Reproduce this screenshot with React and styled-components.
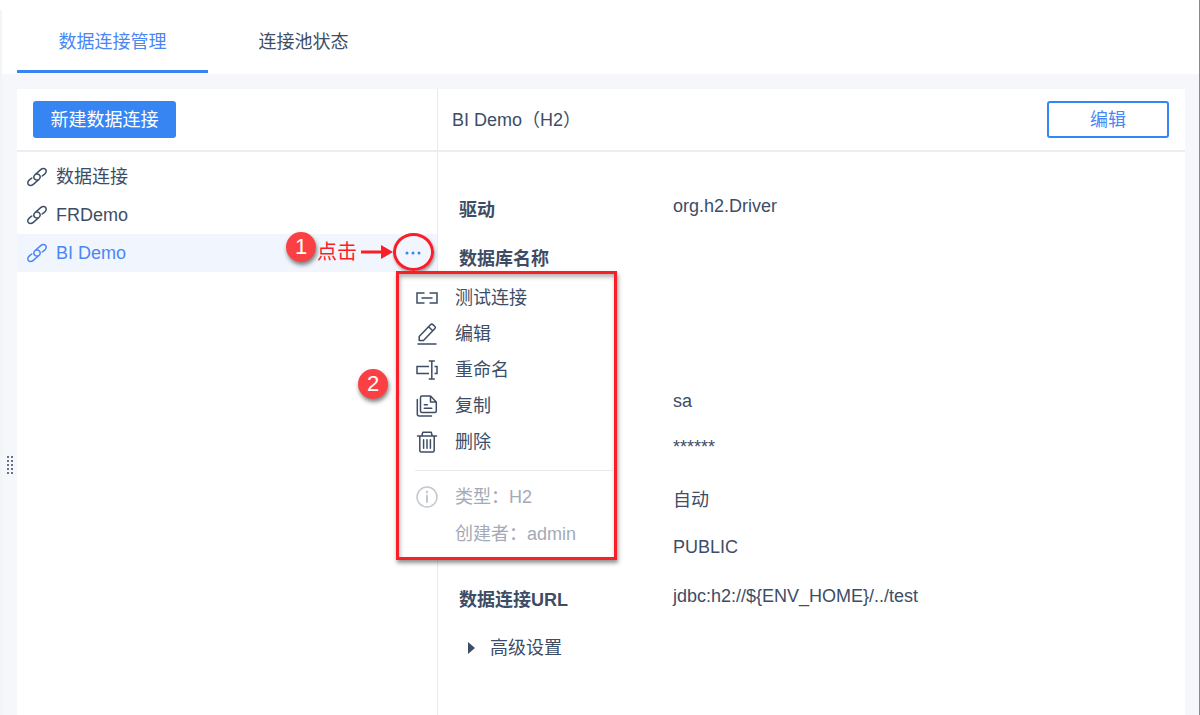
import React from 'react';
import styled, { createGlobalStyle, css } from 'styled-components';

const color = {
  text: '#3d4d66',
  faint: '#a3abb8',
  primary: '#3685f2',
  link: '#4b86f5',
  line: '#e8eaee',
  canvas: '#f6f7fa',
  selected: '#f1f6fe',
  mark: '#fb1d27',
};

const GlobalStyle = createGlobalStyle`
  *, *::before, *::after { box-sizing: border-box; }
  body {
    margin: 0;
    background: #fff;
    color: ${color.text};
    font: 18px/24px "Liberation Sans", "Noto Sans CJK SC", sans-serif;
  }
  button { font: inherit; color: inherit; background: none; border: 0; padding: 0; cursor: pointer; }
  ul, dl, dd, h1 { margin: 0; padding: 0; list-style: none; }
`;

const Root = styled.div`
  min-height: 100vh;
  display: flex;
  padding-top: 10px;
  border-right: 1px solid #8a8a8a;
`;

const Shell = styled.div`
  flex: 1;
  min-width: 0;
  display: flex;
  flex-direction: column;
  border-left: 2px solid #f3f4f7;
`;

const TabBar = styled.div`
  display: flex;
  height: 64px;
  padding-left: 15px;
  background: #fff;
`;

const Tab = styled.button`
  width: 191px;
  height: 63px;
  padding-top: 4px;
  border-bottom: 3px solid ${(p) => (p.$active ? color.primary : 'transparent')};
  color: ${(p) => (p.$active ? color.link : color.text)};
`;

const Workspace = styled.div`
  flex: 1;
  display: flex;
  background: ${color.canvas};
  padding-right: 14px;
`;

const Gutter = styled.div`
  width: 15px;
  display: flex;
  align-items: center;
  justify-content: center;
  padding-top: 140px;
`;

const Panels = styled.main`
  flex: 1;
  min-width: 0;
  display: flex;
  margin-top: 15px;
  background: #fff;
`;

const Sidebar = styled.section`
  width: 421px;
  flex: none;
  border-right: 1px solid ${color.line};
`;

const Detail = styled.section`
  flex: 1;
  min-width: 0;
`;

const PanelHeader = styled.header`
  display: flex;
  align-items: center;
  justify-content: space-between;
  height: 63px;
  padding: 0 16px 0 ${(p) => (p.$detail ? 14 : 16)}px;
  border-bottom: 2px solid #eceef1;
`;

const Button = styled.button`
  height: 37px;
  border-radius: 3px;
  border: 2px solid ${color.primary};
  ${(p) =>
    p.$primary
      ? css`width: 143px; background: ${color.primary}; color: #fff;`
      : css`width: 122px; background: #fff; color: ${color.link};`}
`;

const Title = styled.h1`
  font-size: 18px;
  font-weight: 400;
`;

const ConnectionList = styled.ul`
  && { padding-top: 6px; }
`;

const ConnectionRow = styled.li`
  position: relative;
  display: flex;
  height: 38px;
  background: ${(p) => (p.$selected ? color.selected : 'transparent')};
  color: ${(p) => (p.$selected ? color.link : color.text)};
`;

const ConnectionName = styled.button`
  flex: 1;
  display: flex;
  align-items: center;
  gap: 9px;
  padding-left: 10px;
  text-align: left;
`;

const MoreAnchor = styled.div`
  position: relative;
  width: 40px;
  display: flex;
`;

const MoreButton = styled.button`
  width: 32px;
  display: flex;
  align-items: center;
  justify-content: center;
`;

const Menu = styled.div`
  position: absolute;
  z-index: 2;
  top: 37px;
  left: -1px;
  width: 221px;
  padding: 6px 0 5px 16px;
  background: #fff;
  border: 3px solid ${color.mark};
  box-shadow: 1px 3px 4px rgba(40, 40, 40, 0.5), inset 1px 3px 4px rgba(40, 40, 40, 0.35);
  color: ${color.text};
`;

const menuLine = css`
  display: flex;
  align-items: center;
  gap: 16px;
  width: 100%;
  text-align: left;
`;

const MenuItem = styled.button`
  ${menuLine}
  height: 36px;
`;

const MenuInfo = styled.div`
  ${menuLine}
  height: 37px;
  color: ${color.faint};
`;

const MenuDivider = styled.div`
  height: 1px;
  margin: 10px 0 7px;
  background: ${color.line};
`;

const IconSlot = styled.span`
  width: 24px;
  height: 24px;
  flex: none;
`;

const Callout = styled.div`
  position: absolute;
  z-index: 3;
  right: 44px;
  top: -4px;
  display: flex;
  align-items: center;
  color: ${color.mark};
  font-size: 20px;
`;

const Badge = styled.span`
  display: flex;
  align-items: center;
  justify-content: center;
  width: 30px;
  height: 30px;
  border-radius: 50%;
  background: #fb4043;
  color: #fff;
  font-size: 22px;
  box-shadow: 1px 3px 4px rgba(40, 40, 40, 0.6);
`;

const CalloutText = styled.span`
  padding: 10px 4px 0 1px;
`;

const CalloutArrow = styled.svg`
  margin-top: 10px;
`;

const MenuBadge = styled(Badge)`
  position: absolute;
  left: -41px;
  top: 95px;
`;

const Ring = styled.span`
  position: absolute;
  z-index: 1;
  left: -4px;
  top: -1px;
  width: 41px;
  height: 38px;
  border: 3px solid ${color.mark};
  border-radius: 50%;
  box-shadow: 1px 2px 3px rgba(40, 40, 40, 0.45);
  pointer-events: none;
`;

const Fields = styled.dl`
  && { padding: 34px 22px 0 21px; }
`;

const Field = styled.div`
  display: flex;
  align-items: center;
  height: ${(p) => p.$height}px;
`;

const Label = styled.dt`
  width: 214px;
  flex: none;
  font-weight: 700;
`;

const Value = styled.dd`
  && { padding-bottom: ${(p) => (p.$centered ? 0 : 8)}px; }
`;

const Advanced = styled.button`
  display: flex;
  align-items: center;
  gap: 15px;
  height: 48px;
  margin-left: 30px;
`;

function Svg({ size = 24, children, ...rest }) {
  return (
    <svg width={size} height={size} viewBox={`0 0 ${size} ${size}`} fill="none" stroke="currentColor"
      strokeWidth="1.5" strokeLinecap="round" strokeLinejoin="round" aria-hidden="true" {...rest}>
      {children}
    </svg>
  );
}

const ChainIcon = () => (
  <Svg size={20}>
    <path d="M10.6 12.9C8.6 13.5 6.4 11.6 6.9 9.4C7.1 8.5 7.7 7.8 8.4 7.2L14 2.4C15.7 1 18 1.1 18.9 2.9C19.6 4.5 18.9 6 17.6 7.1L15.2 9" />
    <path d="M9.4 7.1C11.4 6.5 13.6 8.4 13.1 10.6C12.9 11.5 12.3 12.2 11.6 12.8L6 17.6C4.3 19 2 18.9 1.1 17.1C.4 15.5 1.1 14 2.4 12.9L4.8 11" />
  </Svg>
);

const TestIcon = () => (
  <Svg strokeLinecap="butt" strokeLinejoin="miter">
    <path d="M9.5 7H2v10h7.5M14.5 7H22v10h-7.5M6.5 12h11" />
  </Svg>
);

const EditIcon = () => (
  <Svg>
    <path d="M3 22h18M4.2 18.6V14.6L15.7 2.6Q16.8 1.6 17.9 2.6L19.9 4.5Q20.9 5.5 19.9 6.6L8.5 18.6ZM13.6 4.8l4.1 4" />
  </Svg>
);

const RenameIcon = () => (
  <Svg strokeLinecap="butt" strokeLinejoin="miter">
    <path d="M14 8.5H2v7h12M19.5 8.5H22v7h-2.5M16.8 3v18M13.8 3h6M13.8 21h6" />
  </Svg>
);

const CopyIcon = () => (
  <Svg>
    <path d="M7 2H15.5L21.3 8V17Q21.3 18.5 19.8 18.5H7Q5.5 18.5 5.5 17V3.5Q5.5 2 7 2ZM15.5 2v6h5.8M9.3 10.7h3M9.3 14.2h7.5M2.3 5.5V20Q2.3 22 4.3 22H16.5" />
  </Svg>
);

const TrashIcon = () => (
  <Svg>
    <path d="M2.5 6h19M6.8 5.8L7.8 2.3h8.4l1 3.5M4.8 6v14.5Q4.8 22 6.3 22H17.7Q19.2 22 19.2 20.5V6M8.6 9.8v8.4M12 9.8v8.4M15.4 9.8v8.4" />
  </Svg>
);

const InfoIcon = () => (
  <Svg stroke="#c3c8d0">
    <circle cx="12" cy="12" r="10" />
    <path d="M12 10.5v6.5" strokeWidth="2" />
    <circle cx="12" cy="7" r=".6" strokeWidth="1.2" />
  </Svg>
);

const connections = ['数据连接', 'FRDemo', 'BI Demo'];

const actions = [
  ['测试连接', TestIcon],
  ['编辑', EditIcon],
  ['重命名', RenameIcon],
  ['复制', CopyIcon],
  ['删除', TrashIcon],
];

const fields = [
  { label: '驱动', value: 'org.h2.Driver', height: 48 },
  { label: '数据库名称', height: 49 },
  { height: 49 },
  { height: 49 },
  { value: 'sa', height: 48 },
  { value: '******', height: 44 },
  { value: '自动', height: 54, centered: true },
  { value: 'PUBLIC', height: 48 },
  { label: '数据连接URL', value: 'jdbc:h2://${ENV_HOME}/../test', height: 49 },
];

function ActionMenu() {
  return (
    <Menu role="menu">
      {actions.map(([name, Icon]) => (
        <MenuItem key={name} role="menuitem"><Icon />{name}</MenuItem>
      ))}
      <MenuDivider />
      <MenuInfo><InfoIcon />类型：H2</MenuInfo>
      <MenuInfo><IconSlot />创建者：admin</MenuInfo>
      <MenuBadge>2</MenuBadge>
    </Menu>
  );
}

function ClickCallout() {
  return (
    <Callout>
      <Badge>1</Badge>
      <CalloutText>点击</CalloutText>
      <CalloutArrow width="32" height="14" viewBox="0 0 32 14" aria-hidden="true">
        <path d="M0 5.5H20V0L32 7L20 14V8.5H0Z" fill={color.mark} />
      </CalloutArrow>
    </Callout>
  );
}

export default function App() {
  return (
    <>
      <GlobalStyle />
      <Root>
        <Shell>
          <TabBar role="tablist">
            <Tab role="tab" aria-selected="true" $active>数据连接管理</Tab>
            <Tab role="tab" aria-selected="false">连接池状态</Tab>
          </TabBar>
          <Workspace>
            <Gutter>
              <svg width="6" height="18" viewBox="0 0 6 18" fill="#66728a" aria-hidden="true">
                {[0, 4, 8, 12, 16].map((y) => (
                  <path key={y} d={`M0 ${y}h2v2H0zM4 ${y}h2v2H4z`} />
                ))}
              </svg>
            </Gutter>
            <Panels>
              <Sidebar>
                <PanelHeader>
                  <Button $primary>新建数据连接</Button>
                </PanelHeader>
                <ConnectionList>
                  {connections.map((name) => {
                    const selected = name === 'BI Demo';
                    return (
                      <ConnectionRow key={name} $selected={selected}>
                        <ConnectionName><ChainIcon />{name}</ConnectionName>
                        {selected && (
                          <>
                            <ClickCallout />
                            <MoreAnchor>
                              <MoreButton aria-label="更多" aria-haspopup="menu" aria-expanded="true">
                                <svg width="16" height="4" viewBox="0 0 16 4" fill={color.primary} aria-hidden="true">
                                  <circle cx="2" cy="2" r="1.5" />
                                  <circle cx="8" cy="2" r="1.5" />
                                  <circle cx="14" cy="2" r="1.5" />
                                </svg>
                              </MoreButton>
                              <Ring />
                              <ActionMenu />
                            </MoreAnchor>
                          </>
                        )}
                      </ConnectionRow>
                    );
                  })}
                </ConnectionList>
              </Sidebar>
              <Detail>
                <PanelHeader $detail>
                  <Title>BI Demo（H2）</Title>
                  <Button>编辑</Button>
                </PanelHeader>
                <Fields>
                  {fields.map((f, i) => (
                    <Field key={i} $height={f.height}>
                      <Label>{f.label}</Label>
                      <Value $centered={f.centered}>{f.value}</Value>
                    </Field>
                  ))}
                </Fields>
                <Advanced aria-expanded="false">
                  <svg width="7" height="12" viewBox="0 0 7 12" fill="currentColor" aria-hidden="true">
                    <path d="M0 0L7 6L0 12Z" />
                  </svg>
                  高级设置
                </Advanced>
              </Detail>
            </Panels>
          </Workspace>
        </Shell>
      </Root>
    </>
  );
}
